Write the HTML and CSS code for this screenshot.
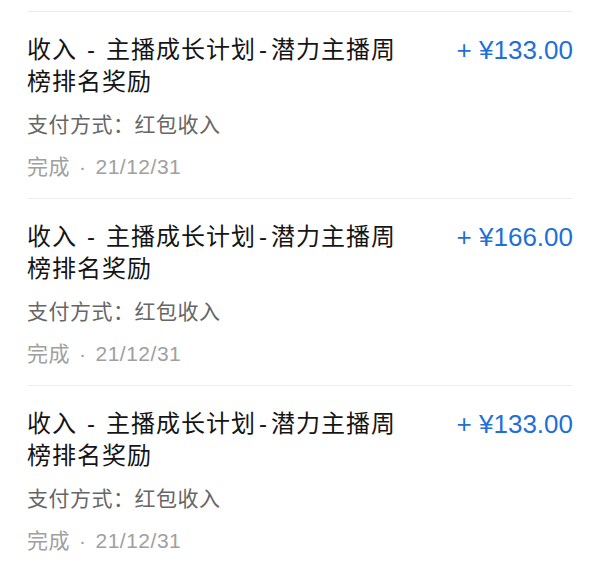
FILE: index.html
```html
<!DOCTYPE html>
<html lang="zh-CN">
<head>
    <meta charset="UTF-8">
    <meta name="viewport" content="width=device-width, initial-scale=1.0">
    <title>账单明细</title>
    <link rel="stylesheet" href="styles.css">
</head>
<body>
    <div class="bill-list">
        <div class="bill-item">
            <div class="bill-main">
                <div class="bill-title">收入<span class="dash">-</span>主播成长计划<span class="dash tight">-</span>潜力主播周<br>榜排名奖励</div>
                <div class="bill-amount">+ ¥133.00</div>
            </div>
            <div class="bill-pay">支付方式：红包收入</div>
            <div class="bill-status">完成<span class="dot">·</span>21/12/31</div>
        </div>
        <div class="bill-item">
            <div class="bill-main">
                <div class="bill-title">收入<span class="dash">-</span>主播成长计划<span class="dash tight">-</span>潜力主播周<br>榜排名奖励</div>
                <div class="bill-amount">+ ¥166.00</div>
            </div>
            <div class="bill-pay">支付方式：红包收入</div>
            <div class="bill-status">完成<span class="dot">·</span>21/12/31</div>
        </div>
        <div class="bill-item">
            <div class="bill-main">
                <div class="bill-title">收入<span class="dash">-</span>主播成长计划<span class="dash tight">-</span>潜力主播周<br>榜排名奖励</div>
                <div class="bill-amount">+ ¥133.00</div>
            </div>
            <div class="bill-pay">支付方式：红包收入</div>
            <div class="bill-status">完成<span class="dot">·</span>21/12/31</div>
        </div>
    </div>
</body>
</html>
```

FILE: styles.css
```css
body {
    margin: 0;
    padding: 11px 27px 0;
    background-color: #fff;
    font-family: "Liberation Sans", "Noto Sans CJK SC", sans-serif;
}
.bill-item {
    border-top: 1px solid #ededed;
    padding: 22px 0 17px;
}
.bill-main {
    display: flex;
    justify-content: space-between;
    align-items: flex-start;
}
.bill-title {
    font-size: 24px;
    line-height: 32px;
    letter-spacing: 1px;
    color: #151515;
}
.dash {
    display: inline-block;
    padding: 0 10px;
}
.dash.tight {
    padding: 0 3px;
}
.bill-amount {
    font-size: 26px;
    line-height: 32px;
    color: #1f6fd8;
    white-space: nowrap;
}
.bill-pay {
    margin-top: 13px;
    font-size: 21px;
    line-height: 28px;
    letter-spacing: 0.5px;
    color: #666;
}
.bill-status {
    margin-top: 14px;
    font-size: 21px;
    line-height: 28px;
    letter-spacing: 0.5px;
    color: #a0a0a0;
}
.dot {
    display: inline-block;
    padding: 0 9px;
}
```
